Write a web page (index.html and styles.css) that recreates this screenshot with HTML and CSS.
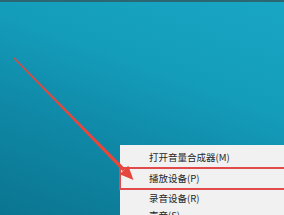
FILE: index.html
```html
<!DOCTYPE html>
<html lang="zh">
<head>
<meta charset="utf-8">
<link rel="stylesheet" href="styles.css">
</head>
<body>
<div class="desktop">
  <svg class="arrow" width="284" height="215" viewBox="0 0 284 215">
    <polygon points="14.4,57.6 13.6,58.4 122.7,171.3 125.3,168.7" fill="#e6463c"/>
    <polygon points="133.5,180 128.3,165.8 119.7,174.2" fill="#e6463c"/>
  </svg>
  <ul class="menu">
    <li class="item">打开音量合成器(M)</li>
    <li class="item item-marked">播放设备(P)</li>
    <li class="item item-short">录音设备(R)</li>
    <li class="item item-short">声音(S)</li>
  </ul>
</div>
</body>
</html>
```

FILE: styles.css
```css
html, body {
  margin: 0;
  padding: 0;
}
.desktop {
  position: relative;
  width: 284px;
  height: 215px;
  overflow: hidden;
  box-sizing: border-box;
  border-top: 2px solid #2a6772;
  background:
    linear-gradient(200deg, #18a6c4 0%, #149dbb 35%, #0f88a6 65%, #0b7590 100%);
}
.arrow {
  position: absolute;
  left: 0;
  top: -2px;
  z-index: 2;
}
.menu {
  position: absolute;
  left: 120px;
  top: 143px;
  width: 180px;
  margin: 0;
  padding: 3px 0 0;
  list-style: none;
  background: #f1f1f1;
  font-family: "Noto Sans CJK SC", "Liberation Sans", sans-serif;
  font-size: 9.5px;
  color: #262626;
}
.item {
  height: 19px;
  line-height: 19px;
  padding-left: 29px;
}
.item-marked {
  margin-left: -1px;
  padding-left: 28px;
  border: 2px solid #e14a4a;
  border-right: none;
}
.item-short {
  height: 17px;
  line-height: 17px;
}
```
